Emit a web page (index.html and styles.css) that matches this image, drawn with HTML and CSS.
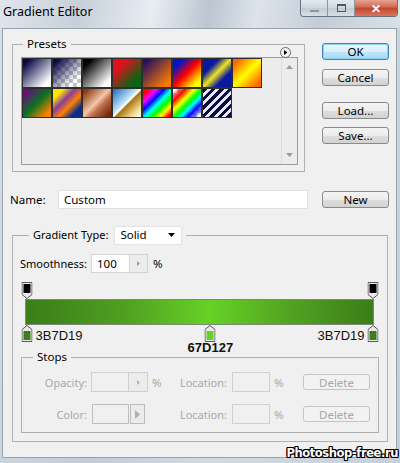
FILE: index.html
```html
<!DOCTYPE html>
<html>
<head>
<meta charset="UTF-8">
<title>Gradient Editor</title>
<link rel="stylesheet" href="styles.css">
</head>
<body>
<div class="window">
	<div class="titlebar">
		<span class="title">Gradient Editor</span>
		<div class="controls">
			<span class="ctl min"><i></i></span>
			<span class="ctl max"><i></i></span>
			<span class="ctl close">&#x2715;</span>
		</div>
	</div>
	<div class="client">
		<div class="top">
			<fieldset class="group presets">
				<legend>Presets</legend>
				<span class="flyout">
					<svg width="11" height="11" viewBox="0 0 11 11"><circle cx="5.5" cy="5.5" r="5" fill="#f4f4f4" stroke="#6a6a6a"/><path d="M4 3l3.5 2.5L4 8z" fill="#000"/></svg>
				</span>
				<div class="list">
					<div class="swatches">
						<div class="sw sw1"></div>
						<div class="sw sw2"></div>
						<div class="sw sw3"></div>
						<div class="sw sw4"></div>
						<div class="sw sw5"></div>
						<div class="sw sw6"></div>
						<div class="sw sw7"></div>
						<div class="sw sw8"></div>
						<div class="sw sw9"></div>
						<div class="sw sw10"></div>
						<div class="sw sw11"></div>
						<div class="sw sw12"></div>
						<div class="sw sw13"></div>
						<div class="sw sw14"></div>
						<div class="sw sw15"></div>
					</div>
					<div class="scroll">
						<svg width="7" height="4" viewBox="0 0 7 4"><path d="M0 4L3.5 0L7 4z" fill="#9a9a9a"/></svg>
						<svg width="7" height="4" viewBox="0 0 7 4"><path d="M0 0L3.5 4L7 0z" fill="#9a9a9a"/></svg>
					</div>
				</div>
			</fieldset>
			<div class="buttons">
				<button class="btn default">OK</button>
				<button class="btn cancel">Cancel</button>
				<button class="btn load">Load...</button>
				<button class="btn save">Save...</button>
			</div>
		</div>

		<div class="name-row">
			<span class="name-label">Name:</span>
			<div class="name-input">Custom</div>
			<button class="btn new">New</button>
		</div>

		<fieldset class="group gradient">
			<legend>
				<span class="type-label">Gradient Type:</span>
				<span class="select">Solid<svg width="7" height="4" viewBox="0 0 7 4"><path d="M0 0h7L3.5 4z" fill="#000"/></svg></span>
			</legend>

			<div class="smooth-row">
				<span class="smooth-label">Smoothness:</span>
				<div class="field">100</div>
				<span class="spin"><svg width="3" height="5" viewBox="0 0 3 5"><path d="M0 0l3 2.5L0 5z" fill="#9a9a9a"/></svg></span>
				<span class="pct">%</span>
			</div>

			<div class="track">
				<div class="bar"></div>
				<div class="stops-layer">
					<span class="ostop" style="left:0%">
						<svg width="11" height="17" viewBox="0 0 11 17"><path d="M0.5 0.5h10v12l-5 4l-5-4z" fill="#e8e8e8" stroke="#5a5a5a"/><rect x="2" y="2" width="7" height="9" fill="#000"/></svg>
					</span>
					<span class="ostop" style="left:100%">
						<svg width="11" height="17" viewBox="0 0 11 17"><path d="M0.5 0.5h10v12l-5 4l-5-4z" fill="#e8e8e8" stroke="#5a5a5a"/><rect x="2" y="2" width="7" height="9" fill="#000"/></svg>
					</span>
					<span class="cstop" style="left:0%">
						<svg width="11" height="17" viewBox="0 0 11 17"><path d="M5.5 0.5l5 4v12h-10v-12z" fill="#e8e8e8" stroke="#5a5a5a"/><rect x="2" y="6" width="7" height="9" fill="#3b7d19"/></svg>
						<span class="code after">3B7D19</span>
					</span>
					<span class="cstop" style="left:53%">
						<svg width="11" height="17" viewBox="0 0 11 17"><path d="M5.5 0.5l5 4v12h-10v-12z" fill="#e8e8e8" stroke="#5a5a5a"/><rect x="2" y="6" width="7" height="9" fill="#67d127"/></svg>
						<span class="code below">67D127</span>
					</span>
					<span class="cstop" style="left:100%">
						<svg width="11" height="17" viewBox="0 0 11 17"><path d="M5.5 0.5l5 4v12h-10v-12z" fill="#e8e8e8" stroke="#5a5a5a"/><rect x="2" y="6" width="7" height="9" fill="#3b7d19"/></svg>
						<span class="code before">3B7D19</span>
					</span>
				</div>
			</div>

			<fieldset class="group stops">
				<legend>Stops</legend>
				<div class="stop-row">
					<span class="dlabel">Opacity:</span>
					<div class="dbox"></div>
					<span class="dspin"><svg width="3" height="5" viewBox="0 0 3 5"><path d="M0 0l3 2.5L0 5z" fill="#b0b0b0"/></svg></span>
					<span class="dpct">%</span>
					<span class="dlabel loc">Location:</span>
					<div class="dbox"></div>
					<span class="dpct2">%</span>
					<button class="btn off">Delete</button>
				</div>
				<div class="stop-row second">
					<span class="dlabel">Color:</span>
					<div class="dcolor"></div>
					<span class="darrow"><svg width="5" height="9" viewBox="0 0 5 9"><path d="M0 0l5 4.5L0 9z" fill="#b0b0b0"/></svg></span>
					<span class="dpct"></span>
					<span class="dlabel loc">Location:</span>
					<div class="dbox"></div>
					<span class="dpct2">%</span>
					<button class="btn off">Delete</button>
				</div>
			</fieldset>
		</fieldset>
	</div>
	<div class="watermark">Photoshop-free.ru</div>
</div>
</body>
</html>
```

FILE: styles.css
```css
body{
	margin:0;
	font-family:"Noto Sans", "Open Sans", sans-serif;
	font-size:11px;
	color:#000;
}
.window{
	position:relative;
	width:400px;
	height:463px;
	overflow:hidden;
	background:linear-gradient(100deg, #d6dee7 0%, #c2ccd7 35%, #d2dae3 60%, #c6d0da 100%);
}

/* title bar */
.titlebar{
	height:28px;
	display:flex;
	justify-content:space-between;
	align-items:flex-start;
	background:linear-gradient(100deg, #dfe5ec 0%, #c7d0da 20%, #e8edf2 38%, #bcc6d1 52%, #dde3ea 64%, #c4cdd7 80%, #d9e0e8 100%);
}
.title{
	padding:3px 0 0 3px;
	font-size:12.5px;
	line-height:17px;
}
.controls{
	display:flex;
	height:16px;
	margin-right:2px;
	border:1px solid #66717d;
	border-top:0;
	border-radius:0 0 4px 4px;
	overflow:hidden;
}
.ctl{
	display:flex;
	align-items:center;
	justify-content:center;
	width:26px;
	background:linear-gradient(#e4e9ee, #cfd7df 50%, #c2ccd6 51%, #d6dde4);
}
.ctl + .ctl{
	border-left:1px solid #8b96a1;
}
.min i{
	width:9px;
	height:2px;
	margin-top:5px;
	background:#8a96a2;
}
.max i{
	width:7px;
	height:5px;
	border:1px solid #4d5660;
	border-top-width:2px;
}
.close{
	width:42px;
	color:#fff;
	font-size:12px;
	font-weight:bold;
	background:linear-gradient(#e6a190, #d06a51 45%, #c2452b 50%, #d9745b);
}

/* client area */
.client{
	margin:0 3px 0 2px;
	height:430px;
	box-sizing:border-box;
	border:1px solid #98a3ae;
	background:#f0f0f0;
}
fieldset.group{
	margin:0;
	padding:0;
	min-width:0;
	box-sizing:border-box;
	border:1px solid #b0b0b0;
	position:relative;
}
fieldset.group > legend{
	padding:0 4px;
	line-height:16px;
}

.top{
	display:flex;
	align-items:flex-start;
	padding:7px 0 0 9px;
}
.presets{
	width:293px;
	padding:5px 6px 6px 8px !important;
}
.presets > legend{
	margin-left:2px;
	font-size:11.5px;
}
.flyout{
	position:absolute;
	left:265px;
	top:-6px;
	width:11px;
	height:11px;
	background:#f0f0f0;
	padding:0 2px;
}
.list{
	display:flex;
	justify-content:space-between;
	width:277px;
	height:108px;
	box-sizing:border-box;
	border:1px solid #9c9c9c;
	background:#ececec;
}
.swatches{
	display:grid;
	grid-template-columns:repeat(8, 30px);
	grid-auto-rows:30px;
	align-content:start;
}
.sw{
	box-sizing:border-box;
	border:1px solid #2e2e2e;
	background-color:#fff;
}
.sw1{ background:linear-gradient(135deg, #0a0a48 12%, #ffffff 85%); }
.sw2{ background:linear-gradient(135deg, #0a0a48 10%, rgba(10,10,72,0) 75%), repeating-conic-gradient(#c4c4c4 0 25%, #fff 0 50%) 0 0/8px 8px; }
.sw3{ background:linear-gradient(135deg, #000 15%, #fff 85%); }
.sw4{ background:linear-gradient(135deg, #e0101c 25%, #0b6414 78%); }
.sw5{ background:linear-gradient(135deg, #281060 10%, #ff7c00 88%); }
.sw6{ background:linear-gradient(135deg, #0014c8 18%, #ff0000 50%, #ffff00 85%); }
.sw7{ background:linear-gradient(135deg, #0a1aa0 28%, #f2e41c 50%, #0a1aa0 72%); }
.sw8{ background:linear-gradient(135deg, #ff6a00 12%, #ffff00 50%, #ff6a00 88%); }
.sw9{ background:linear-gradient(135deg, #6a0c7c 10%, #0b7220 50%, #ff8000 88%); }
.sw10{ background:linear-gradient(135deg, #ffe600 18%, #8c3c9c 40%, #ff8000 60%, #0a2a8c 82%); }
.sw11{ background:linear-gradient(135deg, #8a3a12 8%, #f4c6a8 48%, #c07050 62%, #6e2a0c 92%); }
.sw12{ background:linear-gradient(135deg, #2a78c8 5%, #c4e4fa 44%, #fff 50%, #a87410 54%, #f6dc98 82%, #fff 100%); }
.sw13{ background:linear-gradient(135deg, #ff0000 10%, #ff00ff 24%, #0000ff 38%, #00ffff 52%, #00ff00 66%, #ffff00 80%, #ff0000 94%); }
.sw14{ background:linear-gradient(135deg, rgba(255,0,0,0) 5%, #ff0000 22%, #ffff00 38%, #00ff00 52%, #00ffff 64%, #0000ff 76%, rgba(255,0,255,0) 95%), repeating-conic-gradient(#c4c4c4 0 25%, #fff 0 50%) 0 0/8px 8px; }
.sw15{ background:repeating-linear-gradient(135deg, #0c0c44 0 3px, #e8e8f4 3px 6px); }
.scroll{
	width:15px;
	display:flex;
	flex-direction:column;
	align-items:center;
	justify-content:space-between;
	padding:7px 0 7px;
	border-left:1px solid #dcdcdc;
}

.buttons{
	display:flex;
	flex-direction:column;
	margin:7px 0 0 17px;
}
.btn{
	width:67px;
	height:17px;
	padding:0;
	box-sizing:border-box;
	border:1px solid #8a8a8a;
	border-radius:3px;
	font-family:inherit;
	font-size:11.5px;
	line-height:15px;
	color:#000;
	background:linear-gradient(#f4f4f4, #ececec 50%, #dedede 51%, #d2d2d2);
}
.btn.default{
	border-color:#3c86c4;
	box-shadow:inset 0 0 0 1px #8fd0f2;
	background:linear-gradient(#eaf6fd, #d9f0fc 50%, #bee6fd 51%, #a7d9f5);
}
.cancel{ margin-top:9px; }
.load{ margin-top:16px; }
.save{ margin-top:8px; }

.name-row{
	display:flex;
	align-items:center;
	margin-top:18px;
	padding-left:7px;
	height:19px;
}
.name-label{
	width:48px;
	font-size:11.5px;
}
.name-input{
	width:250px;
	height:19px;
	box-sizing:border-box;
	padding-left:5px;
	line-height:18px;
	background:#fff;
	border:1px solid #e2e2e2;
	font-size:11.5px;
}
.new{
	margin-left:14px;
}

/* gradient group */
.gradient{
	margin:16px 0 0 9px !important;
	width:376px;
	padding:9px 7px 8px 7px !important;
}
.gradient > legend{
	display:flex;
	align-items:center;
	margin-left:9px;
	line-height:20px !important;
}
.type-label{
	margin-right:6px;
}
.select{
	display:flex;
	align-items:center;
	justify-content:space-between;
	width:68px;
	height:19px;
	box-sizing:border-box;
	padding:0 6px 0 5px;
	background:#fff;
	border:1px solid #e4e4e4;
	font-size:11.5px;
}

.smooth-row{
	display:flex;
	align-items:center;
	height:19px;
}
.smooth-label{
	width:71px;
}
.field{
	width:39px;
	height:19px;
	box-sizing:border-box;
	padding-left:5px;
	line-height:18px;
	background:#fff;
	border:1px solid #d4d4d4;
	font-size:11.5px;
}
.spin{
	display:flex;
	align-items:center;
	justify-content:center;
	width:18px;
	height:19px;
	box-sizing:border-box;
	border:1px solid #d0d0d0;
	border-left:0;
	background:#ececec;
}
.pct{
	margin-left:5px;
	font-size:11.5px;
}

/* gradient bar with stops */
.track{
	position:relative;
	width:360px;
	height:67px;
	margin-top:9px;
}
.bar{
	position:relative;
	top:17px;
	left:5px;
	width:349px;
	height:26px;
	box-sizing:border-box;
	border:1px solid #7f8a76;
	background:linear-gradient(to right, #3b7d19, #4f9f20 28%, #67d127 53%, #4f9f20 78%, #3b7d19);
}
.stops-layer{
	position:absolute;
	left:7px;
	right:7px;
	top:0;
	bottom:0;
}
.ostop,
.cstop{
	position:absolute;
	width:11px;
	height:17px;
	transform:translateX(-50%);
}
.ostop{ top:0; }
.cstop{ top:43px; }
.ostop svg,
.cstop svg{
	display:block;
}
.code{
	position:absolute;
	font-family:"Liberation Sans", Arial, sans-serif;
	font-size:13px;
	line-height:15px;
	color:#111;
	white-space:nowrap;
}
.code.after{
	left:14px;
	top:3px;
}
.code.before{
	right:14px;
	top:3px;
}
.code.below{
	left:50%;
	top:15px;
	transform:translateX(-50%);
	font-weight:bold;
}

/* stops group */
.stops{
	margin-left:1px !important;
	width:358px;
	padding:7px 0 8px 0 !important;
}
.stops > legend{
	margin-left:11px;
	font-size:11.5px;
}
.stop-row{
	display:flex;
	align-items:center;
	height:20px;
	color:#a8a8a8;
}
.stop-row.second{
	margin-top:12px;
}
.dlabel{
	width:65px;
	margin-right:4px;
	text-align:right;
}
.dlabel.loc{
	width:49px;
	margin-right:5px;
}
.dbox{
	width:38px;
	height:20px;
	box-sizing:border-box;
	border:1px solid #cfcfcf;
	background:#f0f0f0;
}
.dspin{
	display:flex;
	align-items:center;
	justify-content:center;
	width:19px;
	height:20px;
	box-sizing:border-box;
	border:1px solid #cfcfcf;
	border-left:0;
	background:#ececec;
}
.dcolor{
	width:37px;
	height:20px;
	margin-left:1px;
	box-sizing:border-box;
	border:1px solid #bdbdbd;
	background:#f0f0f0;
}
.darrow{
	display:flex;
	align-items:center;
	justify-content:center;
	width:15px;
	height:20px;
	margin:0 3px 0 1px;
	box-sizing:border-box;
	border:1px solid #bdbdbd;
	background:#ececec;
}
.dpct{
	width:26px;
	margin-left:4px;
	font-size:11.5px;
}
.dpct2{
	width:29px;
	margin-left:4px;
	font-size:11.5px;
}
.btn.off{
	height:16px;
	color:#a8a8a8;
	border-color:#c4c4c4;
	background:#f2f2f2;
}

.watermark{
	position:absolute;
	right:2px;
	bottom:3px;
	font-family:"DejaVu Sans", sans-serif;
	font-size:11.5px;
	font-weight:bold;
	letter-spacing:-0.4px;
	color:#fff;
	text-shadow:1px 0 0 #000, -1px 0 0 #000, 0 1px 0 #000, 0 -1px 0 #000, 1px 1px 0 #000, -1px -1px 0 #000, 1px -1px 0 #000, -1px 1px 0 #000;
}
```
